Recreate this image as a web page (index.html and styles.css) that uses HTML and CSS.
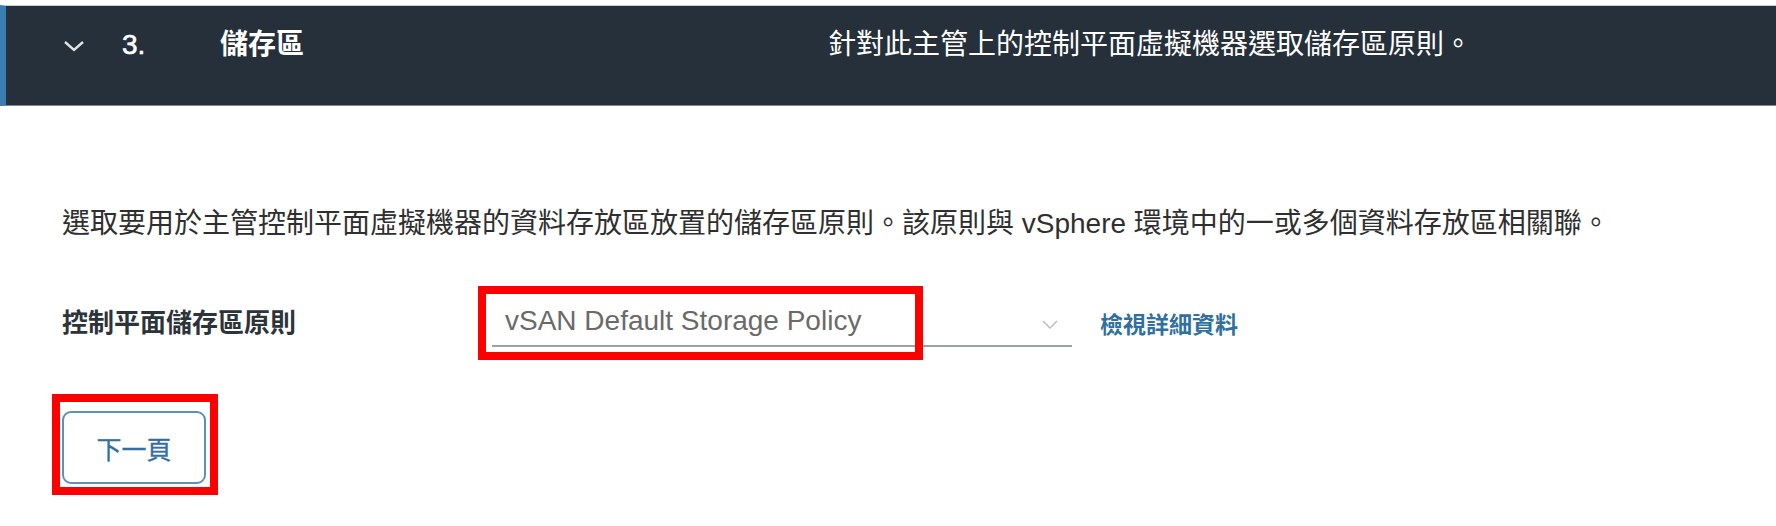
FILE: index.html
```html
<!DOCTYPE html>
<html lang="zh-Hant">
<head>
<meta charset="utf-8">
<title>儲存區</title>
<link rel="stylesheet" href="styles.css">
</head>
<body>
<div class="page">
  <div class="step-header">
    <div class="step-chevron">
      <svg width="22" height="12" viewBox="0 0 22 12"><polyline points="2,2 11,10 20,2" fill="none" stroke="#dfe3e6" stroke-width="2.4"/></svg>
    </div>
    <div class="step-num">3.</div>
    <div class="step-title">儲存區</div>
    <div class="step-desc">針對此主管上的控制平面虛擬機器選取儲存區原則。</div>
  </div>
  <div class="step-body">
    <p class="intro">選取要用於主管控制平面虛擬機器的資料存放區放置的儲存區原則。該原則與 vSphere 環境中的一或多個資料存放區相關聯。</p>
    <div class="form-row">
      <label class="form-label">控制平面儲存區原則</label>
      <div class="select">
        <span class="select-value">vSAN Default Storage Policy</span>
        <svg class="select-caret" width="16" height="9" viewBox="0 0 16 9"><polyline points="1,1 8,8 15,1" fill="none" stroke="#b9bec2" stroke-width="1.5"/></svg>
        <span class="mark mark-select"></span>
      </div>
      <a class="link">檢視詳細資料</a>
    </div>
    <div class="actions">
      <div class="btn-wrap">
        <button class="btn">下一頁</button>
        <span class="mark mark-btn"></span>
      </div>
    </div>
  </div>
</div>
</body>
</html>
```
FILE: styles.css
```css
html, body {
  margin: 0;
  padding: 0;
  background: #ffffff;
}
body {
  font-family: "Liberation Sans", "Noto Sans CJK TC", sans-serif;
}
.page {
  padding-top: 5px;
  min-height: 526px;
  box-sizing: border-box;
}
.step-header {
  display: flex;
  align-items: flex-start;
  height: 101px;
  background: #25303a;
  border-top: 1px solid #c9ced2;
  border-bottom: 1px solid #7d868d;
  border-left: 6px solid #3a7db3;
  padding-left: 57px;
  padding-top: 19px;
  box-sizing: border-box;
  color: #ffffff;
  font-size: 28px;
  line-height: 40px;
}
.step-chevron {
  width: 59px;
  height: 40px;
  display: flex;
  align-items: center;
}
.step-chevron svg {
  display: block;
  margin-top: 2px;
}
.step-num {
  width: 98px;
  font-weight: normal;
  -webkit-text-stroke: 0.6px #ffffff;
}
.step-title {
  width: 608px;
  font-weight: bold;
}
.step-desc {
  font-weight: normal;
}
.step-body {
  padding-left: 62px;
  padding-bottom: 40px;
}
.intro {
  margin: 98px 0 0 0;
  font-size: 28px;
  line-height: 40px;
  color: #2f2f2f;
}
.form-row {
  display: flex;
  align-items: center;
  margin-top: 55px;
}
.form-label {
  width: 430px;
  font-size: 26px;
  line-height: 40px;
  font-weight: bold;
  color: #2c343a;
}
.select {
  position: relative;
  width: 580px;
  height: 48px;
  border-bottom: 2px solid #9aa2a8;
  box-sizing: border-box;
  padding-left: 13px;
  padding-top: 2px;
  display: flex;
  align-items: flex-start;
}
.select-value {
  font-size: 28px;
  line-height: 40px;
  color: #6a6a6a;
  flex: 1;
}
.select-caret {
  margin-right: 14px;
  margin-top: 19px;
}
.link {
  margin-left: 28px;
  font-size: 23px;
  line-height: 40px;
  color: #2f70a0;
  font-weight: bold;
  margin-top: 4px;
}
.actions {
  margin-top: 64px;
}
.btn-wrap {
  position: relative;
  display: inline-block;
  vertical-align: top;
}
.btn {
  display: block;
  width: 144px;
  height: 73px;
  border: 2px solid #5b92b8;
  border-radius: 9px;
  background: #ffffff;
  color: #31709f;
  font-family: "Liberation Sans", "Noto Sans CJK TC", sans-serif;
  font-size: 25px;
  line-height: 36px;
  padding: 4px 0 0 0;
  box-sizing: border-box;
  -webkit-text-stroke: 0.3px #31709f;
}
.mark {
  position: absolute;
  border: 8px solid #ff0000;
  box-sizing: border-box;
  pointer-events: none;
}
.mark-select {
  left: -14px;
  top: -13px;
  width: 445px;
  height: 74px;
}
.mark-btn {
  left: -10px;
  top: -17px;
  width: 166px;
  height: 101px;
}
```
